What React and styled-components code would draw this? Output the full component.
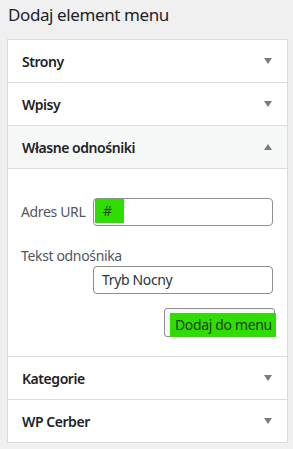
import styled, { createGlobalStyle } from "styled-components";

const GlobalStyle = createGlobalStyle`
  html, body {
    margin: 0;
    padding: 0;
    background: #f0f0f1;
  }
  body {
    font-family: "Noto Sans", "Open Sans", sans-serif;
    color: #1d2327;
    letter-spacing: -0.35px;
  }
`;

const Page = styled.div`
  padding: 3px 6px 0 7px;
`;

const Heading = styled.h2`
  margin: 0 0 0 1px;
  height: 36px;
  font-size: 17px;
  font-weight: 400;
  line-height: 24px;
  letter-spacing: -0.4px;
  color: #1d2327;
`;

const Panel = styled.div`
  width: 279px;
  background: #fff;
  border: 1px solid #dcdcde;
  box-shadow: 0 1px 1px rgba(0, 0, 0, 0.06);
`;

const Section = styled.div`
  border-bottom: ${(p) => (p.last ? "none" : "1px solid #dcdcde")};
`;

const Header = styled.div`
  height: 42px;
  display: flex;
  align-items: center;
  justify-content: space-between;
  padding: 0 15px 0 14px;
  background: ${(p) => (p.open ? "#f6f7f7" : "#fff")};
  border-bottom: ${(p) => (p.open ? "1px solid #dcdcde" : "none")};
  font-size: 14px;
  font-weight: 600;
  letter-spacing: -0.45px;
`;

const Arrow = styled.span`
  width: 0;
  height: 0;
  border-left: 4px solid transparent;
  border-right: 4px solid transparent;
  ${(p) =>
    p.up
      ? "border-bottom: 6px solid #787c82;"
      : "border-top: 6px solid #787c82;"}
`;

const Content = styled.div`
  padding: 29px 13px 19px 13px;
  display: flex;
  flex-direction: column;
`;

const Row = styled.div`
  display: flex;
  align-items: center;
`;

const Label = styled.label`
  width: ${(p) => (p.inline ? "72px" : "auto")};
  font-size: 14px;
  line-height: 20px;
  color: #50575e;
  ${(p) => !p.inline && "margin-top: 20px;"}
`;

const Input = styled.div`
  box-sizing: border-box;
  width: 180px;
  height: 28px;
  border: 1px solid #8c8f94;
  border-radius: 4px;
  display: flex;
  align-items: flex-start;
  font-size: 14px;
  color: #2c3338;
  margin-left: ${(p) => (p.indent ? "72px" : "0")};
`;

const InputText = styled.span`
  padding: 3px 0 0 8px;
  line-height: 20px;
`;

const Mark = styled.span`
  background: #2fde00;
  width: ${(p) => p.w}px;
  height: ${(p) => p.h}px;
  margin-left: ${(p) => p.ml || 0}px;
  box-sizing: border-box;
  padding-left: ${(p) => p.pl}px;
  line-height: ${(p) => p.h}px;
  color: #22401a;
  font-size: 14px;
  white-space: nowrap;
  text-align: left;
  flex-shrink: 0;
`;

const Actions = styled.div`
  display: flex;
  justify-content: flex-end;
  margin-top: 14px;
`;

const Button = styled.button`
  box-sizing: border-box;
  width: 111px;
  height: 29px;
  padding: 4px 0 0 5px;
  border: 1px solid #8c8f94;
  border-radius: 3px;
  background: #f6f7f7;
  display: flex;
  align-items: flex-start;
  font-family: inherit;
  letter-spacing: inherit;
  overflow: visible;
  margin-right: -1px;
`;

const sections = ["Strony", "Wpisy"];
const bottomSections = ["Kategorie", "WP Cerber"];

export default function App() {
  return (
    <Page>
      <GlobalStyle />
      <Heading>Dodaj element menu</Heading>
      <Panel>
        {sections.map((s) => (
          <Section key={s}>
            <Header>
              {s}
              <Arrow />
            </Header>
          </Section>
        ))}
        <Section>
          <Header open>
            Własne odnośniki
            <Arrow up />
          </Header>
          <Content>
            <Row>
              <Label inline>Adres URL</Label>
              <Input>
                <Mark w={29} h={24} ml={1} pl={8}>
                  #
                </Mark>
              </Input>
            </Row>
            <Label>Tekst odnośnika</Label>
            <Input indent>
              <InputText>Tryb Nocny</InputText>
            </Input>
            <Actions>
              <Button>
                <Mark w={106} h={24} pl={5}>
                  Dodaj do menu
                </Mark>
              </Button>
            </Actions>
          </Content>
        </Section>
        {bottomSections.map((s, i) => (
          <Section key={s} last={i === bottomSections.length - 1}>
            <Header>
              {s}
              <Arrow />
            </Header>
          </Section>
        ))}
      </Panel>
    </Page>
  );
}
